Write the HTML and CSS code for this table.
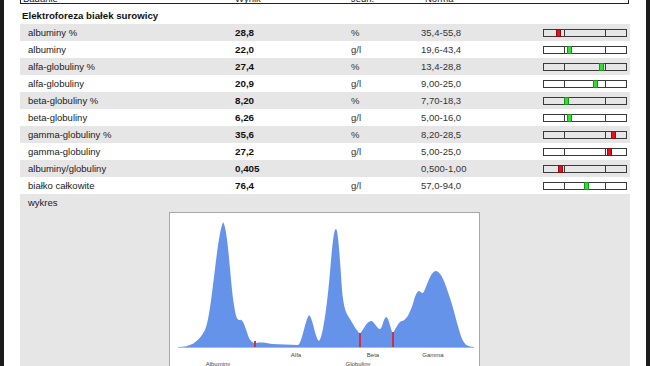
FILE: index.html
```html
<!DOCTYPE html>
<html lang="pl">
<head>
<meta charset="utf-8">
<link rel="stylesheet" href="styles.css">
</head>
<body>
<div class="page">
  <div class="head">
    <span>Badanie</span><span>Wynik</span><span>Jedn.</span><span>Norma</span>
  </div>
  <div class="title">Elektroforeza białek surowicy</div>
  <div class="rows">
    <div class="row alt"><span>albuminy %</span><b>28,8</b><span class="u">%</span><span class="u">35,4-55,8</span><div class="bar"><i></i><i></i><i></i><em class="mk bad" style="left:12px"></em></div></div>
    <div class="row"><span>albuminy</span><b>22,0</b><span class="u">g/l</span><span class="u">19,6-43,4</span><div class="bar"><i></i><i></i><i></i><em class="mk ok" style="left:23px"></em></div></div>
    <div class="row alt"><span>alfa-globuliny %</span><b>27,4</b><span class="u">%</span><span class="u">13,4-28,8</span><div class="bar"><i></i><i></i><i></i><em class="mk ok" style="left:55px"></em></div></div>
    <div class="row"><span>alfa-globuliny</span><b>20,9</b><span class="u">g/l</span><span class="u">9,00-25,0</span><div class="bar"><i></i><i></i><i></i><em class="mk ok" style="left:49px"></em></div></div>
    <div class="row alt"><span>beta-globuliny %</span><b>8,20</b><span class="u">%</span><span class="u">7,70-18,3</span><div class="bar"><i></i><i></i><i></i><em class="mk ok" style="left:20px"></em></div></div>
    <div class="row"><span>beta-globuliny</span><b>6,26</b><span class="u">g/l</span><span class="u">5,00-16,0</span><div class="bar"><i></i><i></i><i></i><em class="mk ok" style="left:23px"></em></div></div>
    <div class="row alt"><span>gamma-globuliny %</span><b>35,6</b><span class="u">%</span><span class="u">8,20-28,5</span><div class="bar"><i></i><i></i><i></i><em class="mk bad" style="left:67px"></em></div></div>
    <div class="row"><span>gamma-globuliny</span><b>27,2</b><span class="u">g/l</span><span class="u">5,00-25,0</span><div class="bar"><i></i><i></i><i></i><em class="mk bad" style="left:63px"></em></div></div>
    <div class="row alt"><span>albuminy/globuliny</span><b>0,405</b><span class="u"></span><span class="u">0,500-1,00</span><div class="bar"><i></i><i></i><i></i><em class="mk bad" style="left:14px"></em></div></div>
    <div class="row"><span>białko całkowite</span><b>76,4</b><span class="u">g/l</span><span class="u">57,0-94,0</span><div class="bar"><i></i><i></i><i></i><em class="mk ok" style="left:40px"></em></div></div>
    <div class="chart-row">
      <div class="chart-label">wykres</div>
      <div class="chart">
        <svg width="309" height="170" viewBox="170 213 309 170" xmlns="http://www.w3.org/2000/svg">
          <line x1="178" y1="347.5" x2="474" y2="347.5" stroke="#b8b8b8" stroke-width="1"/>
          <path fill="#6593ea" d="M178,347 C190,347 198,343 205,330 C212,315 216,240 223,222 C228,228 230,280 234,305 C236,318 237,320 240,320 C243,318 246,330 249,338 C252,343 254,343 256,343 C262,342 266,343 272,344 L298,345 C302,344 305,320 309,315 C313,318 315,338 319,341 C323,338 328,300 331,260 C333,240 334,229 336,229 C338,229 340,260 342,290 C344,310 346,312 348,316 C352,322 356,330 360,334 C363,330 367,321 371,321 C374,321 377,329 380,329 C382,329 384,317 386,317 C389,317 391,332 393,333 C396,328 399,321 402,321 C405,321 410,315 414,300 C416,293 418,291 419,291 C420,291 421,293 423,293 C426,290 430,271 436,271 C441,271 446,285 450,298 C454,310 456,320 460,333 C463,344 467,347 474,347 Z"/>
          <g stroke="#c8324c" stroke-width="2">
            <line x1="255" y1="341" x2="255" y2="347"/>
            <line x1="360" y1="333" x2="360" y2="347"/>
            <line x1="393" y1="332" x2="393" y2="347"/>
          </g>
          <g font-family="Liberation Sans, Arial, sans-serif" font-size="6" fill="#444" text-anchor="middle">
            <text x="296" y="357">Alfa</text>
            <text x="373" y="357">Beta</text>
            <text x="433" y="357">Gamma</text>
            <text x="218" y="366">Albuminy</text>
            <text x="358" y="366">Globuliny</text>
          </g>
        </svg>
      </div>
    </div>
  </div>
</div>
</body>
</html>
```
FILE: styles.css
```css
html, body {
  margin: 0;
  padding: 0;
  background: #1b1b1b;
  height: 100%;
  overflow: hidden;
}
body {
  font-family: "Liberation Sans", Arial, sans-serif;
  font-size: 9.5px;
  color: #1a1a1a;
}
.page {
  background: #fff;
  margin: 0 4px 0 4px;
  width: 642px;
  height: 600px;
  padding: 0 16px;
  box-sizing: border-box;
}
.head {
  margin-top: -12px;
  height: 16px;
  border: 1px solid #222;
  border-top: none;
  width: 609px;
  box-sizing: border-box;
  display: grid;
  grid-template-columns: 212px 116px 74px 1fr;
  padding: 5px 0 0 2px;
  line-height: 12px;
  color: #222;
}
.title {
  font-weight: bold;
  font-size: 9.7px;
  padding: 3px 0 0 2px;
  height: 17px;
  line-height: 17px;
  color: #111;
}
.row {
  display: grid;
  grid-template-columns: 207px 116px 70px 122px 84px;
  align-items: center;
  padding-left: 8px;
  height: 17px;
  line-height: 17px;
  width: 610px;
  box-sizing: border-box;
}
.row.alt {
  background: #e6e6e6;
}
.row b {
  font-weight: bold;
  color: #111;
  font-size: 9.8px;
}
.row .u {
  color: #333;
}
.bar {
  position: relative;
  height: 8px;
  border: 1px solid #3a3a3a;
  box-sizing: border-box;
  display: grid;
  grid-template-columns: 20px 1fr 20px;
  margin-top: 1px;
}
.bar i:nth-child(2) {
  border-left: 1px solid #3a3a3a;
  border-right: 1px solid #3a3a3a;
}
.mk {
  position: absolute;
  top: -1px;
  width: 5px;
  height: 8px;
  box-sizing: border-box;
  border: 1px solid rgba(0, 0, 0, 0.35);
}
.mk.bad { background: #e0141e; }
.mk.ok { background: #2fe02f; }
.chart-row {
  background: #e6e6e6;
  width: 610px;
  height: 200px;
}
.chart-label {
  padding-left: 8px;
  height: 17px;
  line-height: 17px;
}
.chart {
  margin: 1px 0 0 149px;
  width: 311px;
  height: 172px;
  background: #fff;
  border: 1px solid #a8a8a8;
  box-sizing: border-box;
}
.chart svg {
  display: block;
}
```
